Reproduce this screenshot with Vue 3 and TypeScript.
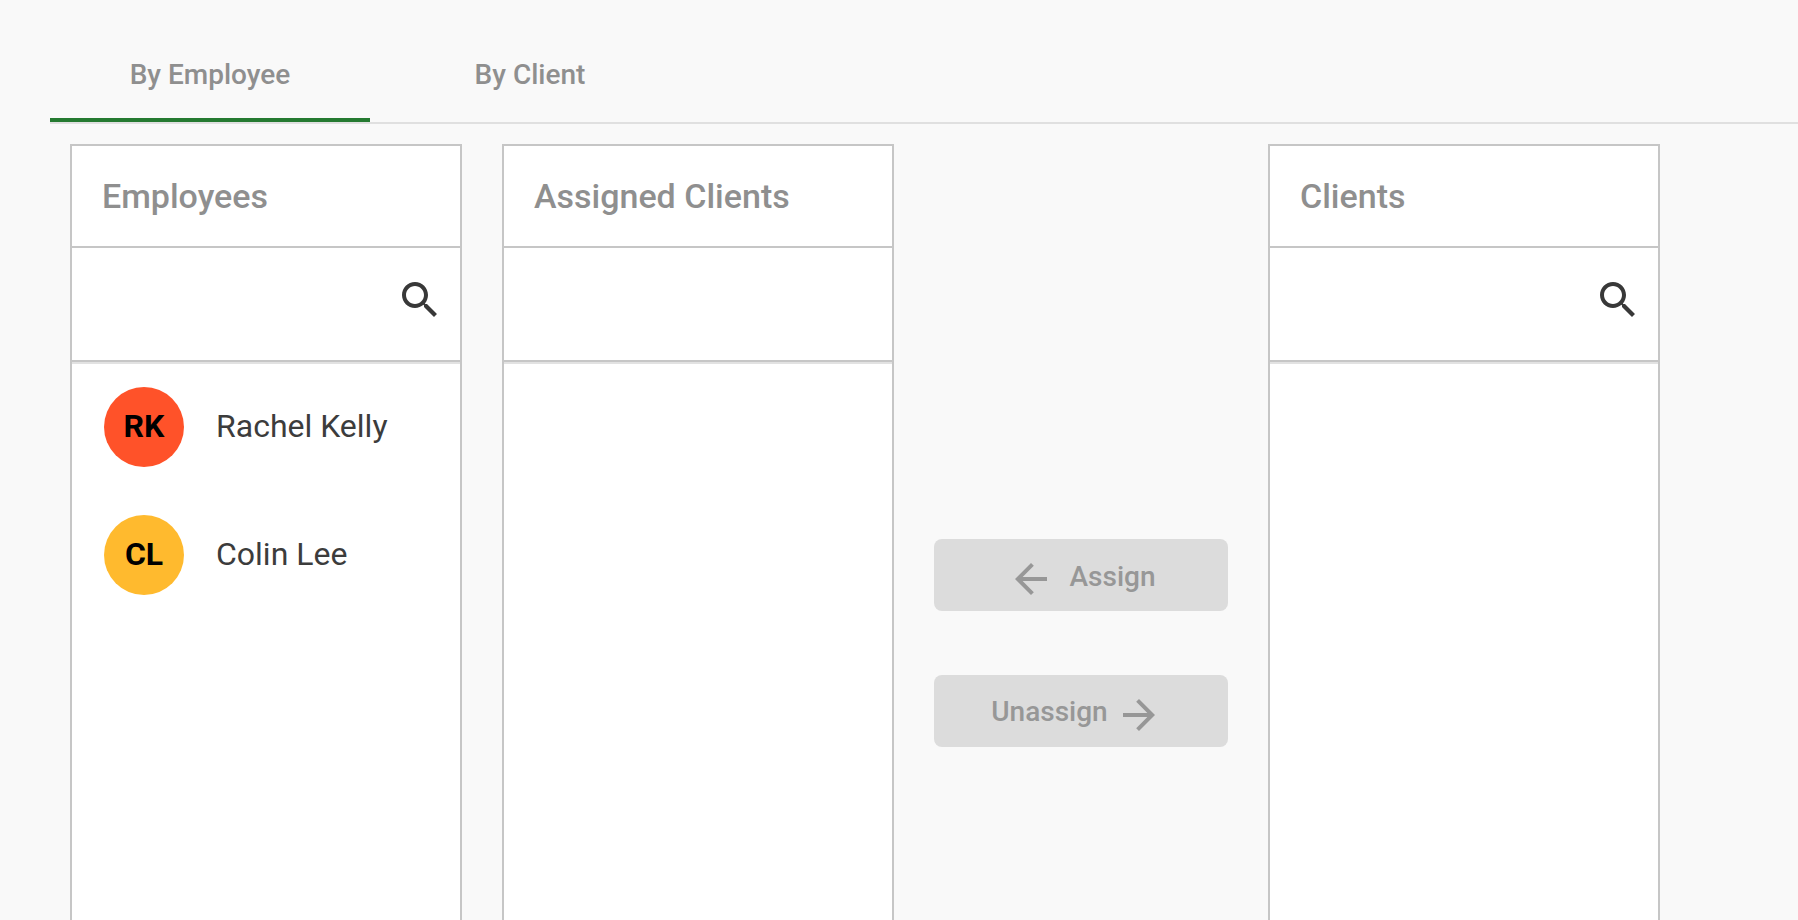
<script setup lang="ts">
interface Employee { initials: string; name: string; color: string }
const employees: Employee[] = [
  { initials: 'RK', name: 'Rachel Kelly', color: '#ff5229' },
  { initials: 'CL', name: 'Colin Lee', color: '#ffba2e' },
]
</script>

<template>
  <div class="page">
    <div class="tabs">
      <div class="tab active">By Employee</div>
      <div class="tab">By Client</div>
    </div>
    <div class="columns">
      <section class="panel">
        <h2 class="title">Employees</h2>
        <div class="search">
          <svg class="icon" viewBox="0 0 24 24"><path d="M15.5 14h-.79l-.28-.27C15.41 12.59 16 11.11 16 9.5 16 5.91 13.09 3 9.5 3S3 5.91 3 9.5 5.91 16 9.5 16c1.61 0 3.09-.59 4.23-1.57l.27.28v.79l5 4.99L20.49 19l-4.99-5zm-6 0C7.01 14 5 11.99 5 9.5S7.01 5 9.5 5 14 7.01 14 9.5 11.99 14 9.5 14z" /></svg>
        </div>
        <ul class="list">
          <li v-for="e in employees" :key="e.initials" class="row">
            <span class="avatar" :style="{ background: e.color }">{{ e.initials }}</span>
            <span class="name">{{ e.name }}</span>
          </li>
        </ul>
      </section>
      <section class="panel">
        <h2 class="title">Assigned Clients</h2>
        <div class="search"></div>
        <div class="list"></div>
      </section>
      <div class="actions">
        <button class="btn assign" type="button">
          <svg class="arrow" viewBox="0 0 24 24"><path d="M20 11H7.83l5.59-5.59L12 4l-8 8 8 8 1.41-1.41L7.83 13H20v-2z" /></svg>
          <span class="label">Assign</span>
        </button>
        <button class="btn unassign" type="button">
          <span>Unassign</span>
          <svg class="arrow" viewBox="0 0 24 24"><path d="M12 4l-1.41 1.41L16.17 11H4v2h12.17l-5.58 5.59L12 20l8-8z" /></svg>
        </button>
      </div>
      <section class="panel">
        <h2 class="title">Clients</h2>
        <div class="search">
          <svg class="icon" viewBox="0 0 24 24"><path d="M15.5 14h-.79l-.28-.27C15.41 12.59 16 11.11 16 9.5 16 5.91 13.09 3 9.5 3S3 5.91 3 9.5 5.91 16 9.5 16c1.61 0 3.09-.59 4.23-1.57l.27.28v.79l5 4.99L20.49 19l-4.99-5zm-6 0C7.01 14 5 11.99 5 9.5S7.01 5 9.5 5 14 7.01 14 9.5 11.99 14 9.5 14z" /></svg>
        </div>
        <div class="list"></div>
      </section>
    </div>
  </div>
</template>

<style>
html, body { margin: 0; background: #f9f9f9; }
</style>

<style scoped>
.page {
  height: 920px;
  overflow: hidden;
  padding-left: 50px;
  background: #f9f9f9;
  font-family: Roboto, "Liberation Sans", sans-serif;
}
.tabs {
  display: flex;
  height: 124px;
  box-sizing: border-box;
  padding-top: 26px;
  border-bottom: 2px solid #e0e0e0;
}
.tab {
  width: 320px;
  height: 96px;
  box-sizing: border-box;
  display: flex;
  align-items: center;
  justify-content: center;
  padding-top: 4px;
  border-bottom: 4px solid transparent;
  font-size: 28px;
  font-weight: 500;
  color: #8f8f8f;
}
.tab.active { border-bottom-color: #257a31; }
.columns {
  display: flex;
  margin: 20px 0 0 20px;
  height: 998px;
}
.panel {
  width: 392px;
  box-sizing: border-box;
  border: 2px solid #c6c6c6;
  background: #fff;
  display: flex;
  flex-direction: column;
  margin-right: 40px;
}
.panel:last-child { margin-right: 0; }
.title {
  margin: 0;
  height: 102px;
  box-sizing: border-box;
  padding: 0 0 0 30px;
  display: flex;
  align-items: center;
  font-size: 34px;
  font-weight: 500;
  color: #8f8f8f;
  border-bottom: 2px solid #c6c6c6;
}
.search {
  height: 114px;
  box-sizing: border-box;
  display: flex;
  align-items: center;
  justify-content: flex-end;
  padding: 0 16px 8px 0;
  border-bottom: 2px solid #c6c6c6;
  box-shadow: 0 2px 0 #e2e2e2;
}
.icon { width: 48px; height: 48px; fill: #383838; }
.list {
  list-style: none;
  margin: 0;
  padding: 25px 0 0 32px;
  flex: 1;
}
.row {
  display: flex;
  align-items: center;
  height: 80px;
  margin-bottom: 48px;
}
.avatar {
  width: 80px;
  height: 80px;
  box-sizing: border-box;
  padding-bottom: 2px;
  border-radius: 50%;
  display: flex;
  align-items: center;
  justify-content: center;
  flex-shrink: 0;
  font-size: 32px;
  font-weight: 700;
  color: #000;
}
.name {
  margin-left: 32px;
  margin-bottom: 2px;
  font-size: 32px;
  color: #3c3c3c;
}
.actions {
  display: flex;
  flex-direction: column;
  justify-content: center;
  gap: 64px;
  width: 294px;
  margin-right: 40px;
}
.btn {
  height: 72px;
  border: 0;
  border-radius: 8px;
  background: #dcdcdc;
  color: #979797;
  display: flex;
  align-items: center;
  justify-content: center;
  gap: 8px;
  padding: 0;
  font-family: inherit;
  font-size: 28px;
  font-weight: 500;
}
.assign { gap: 15px; }
.unassign { padding-right: 8px; gap: 7px; }
.label { padding-top: 2px; }
.arrow { width: 48px; height: 48px; fill: #979797; margin-top: 8px; }
</style>
